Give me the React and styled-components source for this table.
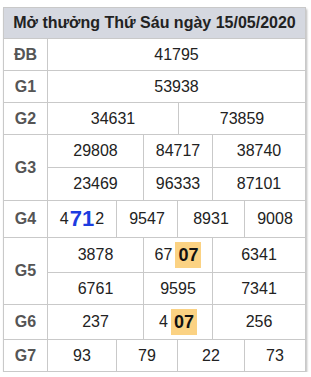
import React from 'react';
import styled, { createGlobalStyle } from 'styled-components';

const GlobalStyle = createGlobalStyle`
  body {
    margin: 0;
    background: #fff;
    font-family: "Liberation Sans", Arial, sans-serif;
  }
`;

const Board = styled.div`
  margin: 7px 0 0 3px;
  width: 301px;
  border: 1px solid #c9c9c9;
  box-shadow: 1px 2px 2px rgba(0, 0, 0, 0.28);
  background: #fff;
  color: #222;
`;

const Header = styled.div`
  height: 30px;
  display: flex;
  align-items: center;
  justify-content: center;
  background: #d5d8e0;
  border-bottom: 1px solid #c9c9c9;
  font-weight: bold;
  font-size: 16px;
  color: #222;
`;

const PrizeRow = styled.div`
  display: flex;
  border-bottom: ${(p) => (p.$last ? 'none' : '1px solid #c9c9c9')};
`;

const Label = styled.div`
  width: 43px;
  flex: none;
  display: flex;
  align-items: center;
  justify-content: center;
  border-right: 1px solid #c9c9c9;
  font-weight: bold;
  font-size: 16px;
  color: #555;
`;

const Values = styled.div`
  flex: 1;
  display: flex;
  flex-direction: column;
`;

const SubRow = styled.div`
  display: grid;
  grid-template-columns: ${(p) => p.$cols};
  height: ${(p) => p.$h}px;
  & + & {
    border-top: 1px solid #c9c9c9;
  }
`;

const Cell = styled.div`
  display: flex;
  align-items: center;
  justify-content: center;
  min-width: 0;
  font-size: 16px;
  color: #222;
  & + & {
    border-left: 1px solid #c9c9c9;
  }
`;

const Loto = styled.span`
  display: inline-flex;
  align-items: center;
  justify-content: center;
  margin-left: 3px;
  width: 26px;
  height: 26px;
  background: #fbd283;
  font-weight: bold;
  font-size: 18px;
  color: #111;
`;

const Special = styled.span`
  font-weight: bold;
  font-size: 22px;
  color: #1d3ce0;
  margin: 0 1px;
`;

const COLS = {
  1: '1fr',
  2: '130px 1fr',
  3: '95px 69px 1fr',
  4: '68px 61px 67px 1fr',
};

const rows = [
  { label: 'ĐB', lines: [{ h: 31, items: ['41795'] }] },
  { label: 'G1', lines: [{ h: 31, items: ['53938'] }] },
  { label: 'G2', lines: [{ h: 31, items: ['34631', '73859'] }] },
  {
    label: 'G3',
    lines: [
      { h: 32, items: ['29808', '84717', '38740'] },
      { h: 32, items: ['23469', '96333', '87101'] },
    ],
  },
  {
    label: 'G4',
    lines: [
      {
        h: 36,
        items: [
          <>4<Special>71</Special>2</>,
          '9547',
          '8931',
          '9008',
        ],
      },
    ],
  },
  {
    label: 'G5',
    lines: [
      { h: 34, items: ['3878', <>67<Loto>07</Loto></>, '6341'] },
      { h: 31, items: ['6761', '9595', '7341'] },
    ],
  },
  {
    label: 'G6',
    lines: [{ h: 34, items: ['237', <>4<Loto>07</Loto></>, '256'] }],
  },
  { label: 'G7', lines: [{ h: 31, items: ['93', '79', '22', '73'] }] },
];

const App = () => {
  return (
    <>
      <GlobalStyle />
      <Board>
        <Header>Mở thưởng Thứ Sáu ngày 15/05/2020</Header>
        {rows.map((row, i) => (
          <PrizeRow key={row.label} $last={i === rows.length - 1}>
            <Label>{row.label}</Label>
            <Values>
              {row.lines.map((line, j) => (
                <SubRow key={j} $h={line.h} $cols={COLS[line.items.length]}>
                  {line.items.map((item, k) => (
                    <Cell key={k}>{item}</Cell>
                  ))}
                </SubRow>
              ))}
            </Values>
          </PrizeRow>
        ))}
      </Board>
    </>
  );
};

export default App;
